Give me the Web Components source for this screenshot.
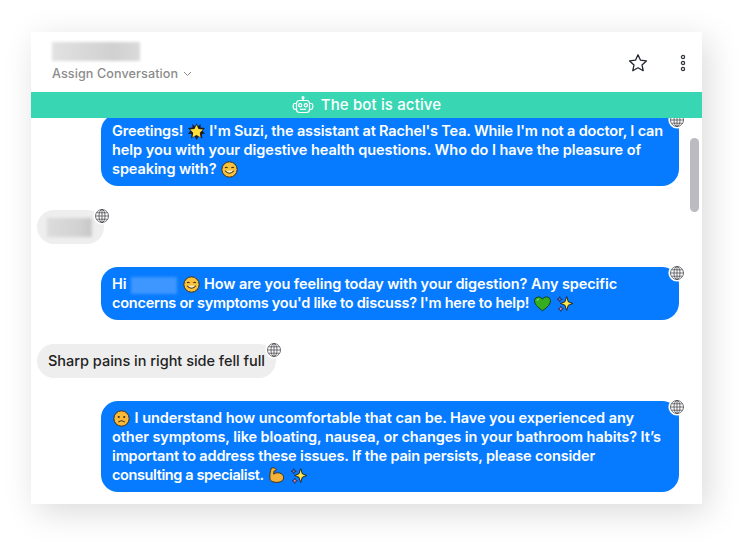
<!DOCTYPE html>
<html><head><meta charset="utf-8">
<style>
html,body{margin:0;padding:0;background:#fff;}
body{width:747px;height:547px;overflow:hidden;font-family:Inter,"Liberation Sans",sans-serif;}
</style></head><body>
<chat-app>
  <chat-header slot="header"></chat-header>
  <bot-banner slot="banner">The bot is active</bot-banner>
  <chat-bubble kind="bot" style="margin-top:-4px">
    <chat-line w="551">Greetings! <chat-emoji name="burst"></chat-emoji> I'm Suzi, the assistant at Rachel's Tea. While I'm not a doctor, I can</chat-line>
    <chat-line w="529">help you with your digestive health questions. Who do I have the pleasure of</chat-line>
    <chat-line w="127">speaking with? <chat-emoji name="smile"></chat-emoji></chat-line>
  </chat-bubble>
  <chat-bubble kind="user" style="width:67px;height:34px"><blur-box style="--w:45px;--h:19px;--c:linear-gradient(90deg,#dcdcdc,#d2d2d2 70%,#c8c8c8);--mx:-1px;--my:1px"></blur-box></chat-bubble>
  <chat-bubble kind="bot">
    <chat-line w="505">Hi <blur-box style="--w:46px;--h:17px;--c:#3d97ff;--mx:1px"></blur-box> <chat-emoji name="smile"></chat-emoji> How are you feeling today with your digestion? Any specific</chat-line>
    <chat-line w="462">concerns or symptoms you'd like to discuss? I'm here to help! <chat-emoji name="heart"></chat-emoji> <chat-emoji name="sparkle"></chat-emoji></chat-line>
  </chat-bubble>
  <chat-bubble kind="user" style="height:34px"><chat-line w="217">Sharp pains in right side fell full</chat-line></chat-bubble>
  <chat-bubble kind="bot">
    <chat-line w="522"><chat-emoji name="sad"></chat-emoji> I understand how uncomfortable that can be. Have you experienced any</chat-line>
    <chat-line w="549">other symptoms, like bloating, nausea, or changes in your bathroom habits? It’s</chat-line>
    <chat-line w="483">important to address these issues. If the pain persists, please consider</chat-line>
    <chat-line w="196">consulting a specialist. <chat-emoji name="muscle"></chat-emoji> <chat-emoji name="sparkle"></chat-emoji></chat-line>
  </chat-bubble>
</chat-app>
<script>
function def(name, html, extra){
  const t=document.createElement('template'); t.innerHTML=html;
  customElements.define(name, class extends HTMLElement{
    constructor(){super(); this.attachShadow({mode:'open'}).appendChild(t.content.cloneNode(true));}
    connectedCallback(){ if(extra) extra(this); }
  });
}
const E={
 smile:`<circle cx="8" cy="8" r="7.2" fill="#fbc23c" stroke="#3a2a10" stroke-width=".9"/><path d="M3.8 6.6q1.2-1.4 2.4 0M9.8 6.6q1.2-1.4 2.4 0" fill="none" stroke="#3a2a10"/><path d="M3.8 9.2q4.200 4.800 8.400 0" fill="#fff3d0" stroke="#3a2a10"/>`,
 sad:`<circle cx="8" cy="8" r="7.2" fill="#fbb93a" stroke="#3a2a10" stroke-width=".9"/><circle cx="5.4" cy="6.6" r="1" fill="#3a2a10"/><circle cx="10.6" cy="6.6" r="1" fill="#3a2a10"/><path d="M5 11.4q3-2.6 6 0" fill="none" stroke="#3a2a10"/>`,
 burst:`<path d="M8 0l1.3 3.2L12 1l-.3 3.300L16 4.600l-2.400 2.700L16 10l-2.900.4.4 4.300-3.400-2.300L8 16l-1.700-3.600-3.400 2.300.5-4.300L0 10l2.400-2.700L0 4.600l4.300-.3L4 1l2.700 2.200z" fill="#1d1d22"/><path d="M8 1.800l1.900 3.800 4.200.6-3 3 .7 4.200L8 11.400l-3.800 2 .7-4.200-3-3 4.200-.6z" fill="#ffe03a"/>`,
 heart:`<path d="M8 14.800C3 11.200.5 8.400.5 5.500.5 3.300 2.300 1.800 4.300 1.800 6 1.800 7.200 2.700 8 3.900c.8-1.200 2-2.100 3.700-2.100 2 0 3.800 1.500 3.800 3.700 0 2.900-2.500 5.700-7.500 9.300z" fill="#35ad1f" stroke="#123d0c" stroke-width=".9"/><path d="M3 5.500q.3-1.500 1.600-1.600" stroke="#8fe07a" fill="none"/>`,
 sparkle:`<path d="M10 1.500l1.600 4.900 4.200 1.600-4.200 1.600L10 14.500 8.400 9.600 4.200 8l4.200-1.600z" fill="#ffe94a" stroke="#1d1d22" stroke-width=".9" stroke-linejoin="round"/><path d="M3.500 1.500l.7 1.800 1.800.7-1.800.7-.7 1.800-.7-1.800L1 4l1.800-.7z" fill="#6b6bd0" stroke="#1d1d22" stroke-width=".6"/><path d="M4.500 10.500l.7 1.800 1.800.7-1.800.7-.7 1.800-.7-1.800L2 13l1.800-.7z" fill="#e58bd0" stroke="#1d1d22" stroke-width=".6"/>`,
 muscle:`<path d="M3.200 1C5 .3 7.200.9 7.600 2.300c.2 1-.6 1.500-1.800 1.400l-.5 3c1.800-1.500 5.200-1.800 7.500-.2 2.300 1.500 2.300 4.800.6 6.400-2 1.800-6 2-8.900 1-1.700-.6-2.500-1.600-2.700-3.100C1.500 8.300 2 3.800 3.200 1z" fill="#f4b23a" stroke="#3a2a10" stroke-width=".9" stroke-linejoin="round"/>`
};
def('chat-emoji',`<style>
:host{display:inline-block;width:17px;height:17px;vertical-align:-3.5px;margin:0 1px;}
svg{display:block;width:17px;height:17px;overflow:visible;}
</style><svg viewBox="0 0 16 16"></svg>`, el=>{ el.shadowRoot.querySelector('svg').innerHTML=E[el.getAttribute('name')]; });
def('blur-box',`<style>
:host{display:inline-block;vertical-align:middle;width:var(--w);height:var(--h);margin:var(--my,0) var(--mx,0);background:var(--c);filter:blur(1.8px);}
</style>`);
def('chat-line',`<style>
:host{display:block;white-space:nowrap;height:19px;}
.i{display:inline-block;}
</style><span class="i"><slot></slot></span>`);
def('chat-app',`<style>
:host{display:flex;flex-direction:column;box-sizing:border-box;position:relative;width:671px;height:472px;margin:32px 0 0 31px;background:#fff;box-shadow:6px 8px 32px rgba(0,0,0,.15);}
.msgs{flex:1;min-height:0;overflow:hidden;position:relative;display:flex;flex-direction:column;gap:23.5px;padding:0 23px 0 6px;}
.sb{position:absolute;right:3px;top:20px;width:9px;height:74px;border-radius:5px;background:#bbbbc1;}
</style><slot name="header"></slot><slot name="banner"></slot><div class="msgs"><slot></slot><div class="sb"></div></div>`);
def('chat-header',`<style>
:host{display:flex;align-items:flex-start;justify-content:space-between;height:60px;padding:0 16px 0 21px;box-sizing:border-box;}
.l{display:flex;flex-direction:column;align-items:flex-start;padding-top:10px;gap:5px;}
.as{display:flex;align-items:center;gap:5px;font:500 12.6px/16px Inter,"Liberation Sans",sans-serif;color:#8b8b8b;letter-spacing:.09px;}
.r{display:flex;align-items:center;gap:32px;padding-top:21px;}
svg{display:block;}
</style><div class="l"><blur-box style="--w:88px;--h:19px;--c:linear-gradient(90deg,#e2e2e2,#d0d0d0 70%,#dadada)"></blur-box>
<div class="as"><span>Assign Conversation</span><svg width="9" height="6" viewBox="0 0 9 6"><path d="M1 1l3.5 3.5L8 1" fill="none" stroke="#8b8b8b" stroke-width="1"/></svg></div></div>
<div class="r"><svg width="20" height="20" viewBox="0 0 20 20"><path d="M10 1.800l2.500 5.400 5.900.7-4.400 4 1.200 5.800L10 14.800l-5.200 2.900L6 11.900l-4.400-4 5.900-.7z" fill="none" stroke="#22262e" stroke-width="1.300" stroke-linejoin="round"/></svg>
<svg width="6" height="18" viewBox="0 0 6 18"><g fill="none" stroke="#33363c" stroke-width="1.300"><circle cx="3" cy="3" r="1.600"/><circle cx="3" cy="9" r="1.600"/><circle cx="3" cy="15" r="1.600"/></g></svg></div>`);
def('bot-banner',`<style>
:host{display:flex;align-items:center;justify-content:center;gap:7px;height:26px;background:#38d6b3;color:#fff;font:500 15px/26px Inter,"Liberation Sans",sans-serif;letter-spacing:.14px;position:relative;z-index:1;}
svg{display:block;}
</style><svg width="22" height="18" viewBox="0 0 22 18" fill="none" stroke="#fff" stroke-width="1.200"><circle cx="11" cy="1.600" r="1"/><path d="M11 2.600V4.500"/><rect x="4.500" y="4.500" width="13" height="12" rx="3"/><circle cx="8.200" cy="9.300" r="1.600"/><circle cx="13.800" cy="9.300" r="1.600"/><path d="M8 13.300h6"/><path d="M4.500 7.500H3A1.800 1.800 0 0 0 1.200 9.300v2.200A1.800 1.800 0 0 0 3 13.300h1.500M17.500 7.500H19a1.800 1.800 0 0 1 1.800 1.800v2.200a1.800 1.800 0 0 1-1.800 1.800h-1.500"/></svg><slot></slot>`);
def('chat-bubble',`<style>
:host{display:block;position:relative;box-sizing:border-box;flex:none;font:600 14.5px/19px Inter,"Liberation Sans",sans-serif;border-radius:17px;}
:host([kind=bot]){align-self:flex-end;width:578px;padding:7px 11px 8px;background:#067bff;color:#fff;}
:host([kind=user]){align-self:flex-start;font-weight:500;padding:7px 11px 8px;background:#eeeeee;color:#222;}
.g{position:absolute;right:-7px;top:-3px;width:18px;height:18px;}
svg{display:block;}
</style><slot></slot><svg class="g" viewBox="0 0 18 18"><circle cx="9" cy="9" r="8.6" fill="#fff"/><g fill="none" stroke="#444449" stroke-width=".75"><circle cx="9" cy="9" r="6.500"/><ellipse cx="9" cy="9" rx="3" ry="6.500"/><path d="M9 2.500v13M2.500 9h13M3.600 5.800h10.800M3.600 12.200h10.800"/></g></svg>`);
/* even out the letter spacing so that each line has the reference's width */
document.querySelectorAll('chat-line').forEach(el=>{
  const span=el.shadowRoot.querySelector('.i'), w=+el.getAttribute('w');
  const n=el.textContent.replace(/\s+/g,' ').trim().length+el.children.length;
  el.style.letterSpacing=((w-span.getBoundingClientRect().width)/n).toFixed(3)+'px';
});
</script>
</body></html>
